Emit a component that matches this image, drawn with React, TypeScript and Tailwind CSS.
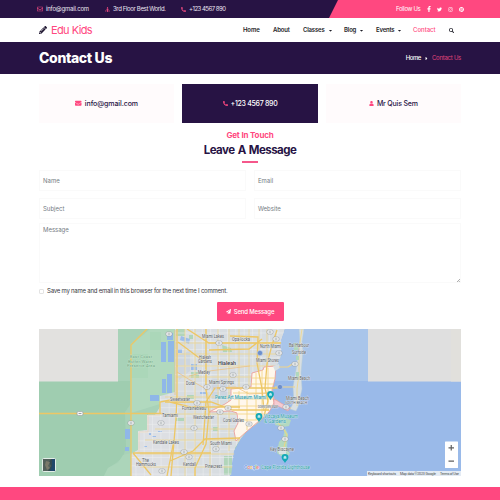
import React from "react";
import {
  FaCaretDown,
  FaCaretRight,
  FaEnvelope,
  FaFacebookF,
  FaInstagram,
  FaPaperPlane,
  FaPencilAlt,
  FaPhoneAlt,
  FaPinterest,
  FaRegEnvelope,
  FaSearch,
  FaStreetView,
  FaTwitter,
  FaUser,
} from "react-icons/fa";

function TopBar() {
  return (
    <div className="relative flex h-[18px] items-center bg-[#271344] text-[6px] leading-none text-[#ece6f2]">
      <div className="box-content flex w-[68px] items-center gap-[3px] pl-[37px]">
        <FaRegEnvelope className="size-[6px] text-[#e0457c]" />
        <span className="tracking-[-0.2px]">info@gmail.com</span>
      </div>
      <div className="flex w-[76px] items-center gap-[3px]">
        <FaStreetView className="size-[5px] text-[#e0457c]" />
        <span className="whitespace-nowrap tracking-[-0.35px]">3rd Floor Best World.</span>
      </div>
      <div className="flex items-center gap-[3px]">
        <FaPhoneAlt className="size-[5px] text-[#e0457c]" />
        <span className="tracking-[-0.5px]">+123 4567 890</span>
      </div>
      <div className="ml-auto flex h-[18px] w-[171px] items-center bg-[#ff4880] pl-[67px] text-white [clip-path:polygon(9px_0,100%_0,100%_100%,0_100%)]">
        <span className="w-[30px] tracking-[-0.35px]">Follow Us</span>
        <FaFacebookF className="mr-[5px] size-[6px]" />
        <FaTwitter className="mr-[6px] size-[5px]" />
        <FaInstagram className="mr-[6px] size-[5px]" />
        <FaPinterest className="size-[5px]" />
      </div>
    </div>
  );
}

function Nav() {
  return (
    <div className="flex h-6 items-center bg-white text-[6px] font-semibold leading-none text-[#1d1d27]">
      <div className="flex w-[243px] items-center gap-[4px] pl-[39px]">
        <FaPencilAlt className="size-2 text-[#1e1530]" />
        <span className="text-[11px] font-normal tracking-[-0.65px] text-[#ff4880] [word-spacing:0.5px]">Edu Kids</span>
      </div>
      <span className="w-[30px] tracking-[-0.1px]">Home</span>
      <span className="w-[30px] tracking-[-0.15px]">About</span>
      <span className="flex w-[41px] items-center gap-[4px] tracking-[-0.2px]">Classes <FaCaretDown className="size-[5px]" /></span>
      <span className="flex w-8 items-center gap-[3px] tracking-[-0.2px]">Blog <FaCaretDown className="size-[5px]" /></span>
      <span className="flex w-[37px] items-center gap-[3px] tracking-[-0.2px]">Events <FaCaretDown className="size-[5px]" /></span>
      <span className="w-9 font-medium text-[#ff4880]">Contact</span>
      <FaSearch className="size-[5px]" />
    </div>
  );
}

function Banner() {
  return (
    <div className="flex h-8 items-center justify-between bg-[#271344] pl-[39px] pr-[39px] text-white">
      <h1 className="text-[14px] font-extrabold leading-none tracking-[-0.35px]">Contact Us</h1>
      <div className="flex items-center gap-[3px] text-[6px] leading-none">
        <span className="font-medium tracking-[-0.4px]">Home</span>
        <FaCaretRight className="size-[5px]" />
        <span className="tracking-[-0.26px] text-[#e0457c]">Contact Us</span>
      </div>
    </div>
  );
}

function Cards() {
  return (
    <div className="mt-[10px] grid h-[39px] shrink-0 grid-cols-3 gap-[8px] px-[39px] text-[7px] font-medium leading-none text-[#271344]">
      <div className="flex items-center justify-center gap-[3px] bg-[#fffbfc]">
        <FaEnvelope className="size-[6.5px] text-[#ff4880]" />
        <span className="tracking-[-0.08px]">info@gmail.com</span>
      </div>
      <div className="flex items-center justify-center gap-[3px] bg-[#271344] text-white">
        <FaPhoneAlt className="size-[5px] text-[#ff4880]" />
        <span className="tracking-[-0.3px]">+123 4567 890</span>
      </div>
      <div className="flex items-center justify-center gap-[3px] bg-[#fffbfc]">
        <FaUser className="size-[5px] text-[#ff4880]" />
        <span className="tracking-[-0.18px]">Mr Quis Sem</span>
      </div>
    </div>
  );
}

const field = "flex h-[21px] items-center border border-[#fafafa] pl-[3px]";

function ContactForm() {
  return (
    <div className="px-[39px]">
      <div className="flex flex-col items-center leading-none">
        <p className="mt-[8px] text-[8px] font-bold tracking-[-0.15px] text-[#ff4880]">Get In Touch</p>
        <h2 className="mt-[5px] h-[12px] text-[11.5px] font-bold leading-[12px] tracking-[-0.55px] text-[#271344] [word-spacing:1px]">Leave A Message</h2>
        <div className="mt-[5px] h-[2px] w-4 bg-[#f5578b]" />
      </div>
      <div className="mt-[7px] grid grid-cols-2 gap-x-[8px] gap-y-[7px] text-[6px] leading-none text-[#747b83]">
        <div className={field}>Name</div>
        <div className={field}>Email</div>
        <div className={field}>Subject</div>
        <div className={field}>Website</div>
      </div>
      <div className="mt-[4px] flex h-[60px] justify-between border border-[#fafafa] pl-[3px] pt-[3px] text-[6px] leading-none text-[#747b83]">
        <span>Message</span>
        <svg className="size-[3px] self-end" viewBox="0 0 3 3" stroke="#777" strokeWidth=".6">
          <path d="M0 3 3 0M1.8 3 3 1.8" />
        </svg>
      </div>
      <div className="mt-[5px] flex h-[6px] items-center gap-[3px] text-[6px] leading-none text-[#36363c]">
        <span className="size-[5px] rounded-[1px] border border-[#e3e3e3]" />
        <span className="whitespace-nowrap tracking-[-0.22px]">Save my name and email in this browser for the next time I comment.</span>
      </div>
      <div className="mx-auto mt-[8px] flex h-[19px] w-[67px] items-center justify-center gap-[3px] rounded-[1px] bg-[#ff4880] text-[6px] font-medium leading-none text-white">
        <FaPaperPlane className="size-[5px]" />
        <span className="tracking-[-0.15px]">Send Message</span>
      </div>
    </div>
  );
}

type Label = [string, number, number, number, number?];

const towns: Label[] = [
  ["Miami Lakes", 202, 338, 22],
  ["Opa-locka", 232, 341, 18],
  ["North Miami", 260, 347.5, 21],
  ["Bal Harbour", 289, 346.5, 20],
  ["Surfside", 292, 353.5, 14],
  ["Hialeah", 199, 358.5, 12],
  ["Gardens", 198, 362.5, 14],
  ["Miami Shores", 256, 361.5, 23],
  ["Medley", 198, 373.5, 12],
  ["Doral", 186, 384.5, 9],
  ["Miami Springs", 209, 383.5, 25],
  ["Miami Beach", 288, 380, 22],
  ["Sweetwater", 170, 400.5, 20],
  ["Fontainebleau", 182, 409.5, 24],
  ["Westchester", 193, 418.5, 21],
  ["Coral Gables", 223, 421.5, 21],
  ["Tamiami", 162, 416.5, 16],
  ["Kendale Lakes", 153, 443.5, 26],
  ["South Miami", 210, 445, 22],
  ["Kendall", 183, 465.5, 13],
  ["Pinecrest", 205, 467.5, 17],
  ["The", 142, 461.5, 7],
  ["Hammocks", 136, 465.5, 20],
  ["Key Biscayne", 270, 451, 24],
  ["Miami Beach", 286, 400, 23],
  ["SOUTH BEACH", 285, 404, 22, 3],
  ["DOWNTOWN MIAMI", 258, 408, 20, 3],
];

const attractions: Label[] = [
  ["Perez Art Museum Miami", 215, 398.5, 51, 5],
  ["Vizcaya Museum", 264, 418, 34, 4.5],
  ["& Gardens", 264, 422.5, 22, 4.5],
  ["Cape Florida Lighthouse", 261, 469, 49, 4.5],
];

const shields: [number, number][] = [
  [169, 334], [219, 343], [270, 332], [276, 339], [279, 353],
  [233, 375], [223, 389], [207, 387], [246, 387], [295, 364], [197, 403], [228, 408],
  [194, 428], [220, 412], [249, 424], [281, 428], [285, 439], [216, 449], [184, 452],
  [162, 471], [161, 423], [131, 423], [80, 413.5], [189, 457], [286, 407],
];

const pins: [number, number][] = [[270.5, 395], [259, 417], [285, 458]];

const streets = Array.from({ length: 18 }, (_, i) => i);

function MapView() {
  return (
    <svg
      className="block h-[147px] w-[422px] font-[Roboto,'Liberation_Sans',sans-serif]"
      viewBox="39 329 422 147"
    >
      <defs>
        <clipPath id="city">
          <path d="M175 329H285L281 343 282 354 276 370 271 386 272 397 260 421 246 432 240 440 235 448 231 476H131V454L138 450V432L147 430V415H155L160 407V396L175 392Z" />
        </clipPath>
      </defs>
      <rect x="39" y="329" width="422" height="147" fill="#9fcdb0" />
      <path d="M118 329H176V476H104L108 468 116 463 123 457 126 447 125 412 130 405 130 381H118Z" fill="#a8d2b8" />
      <path d="M131 344 143 335 150 329H180V396L160 404 131 413Z" fill="#b1d9be" />
      <rect x="39" y="329" width="79" height="52.5" fill="#e2e1df" />
      <path d="M131 354h17v24h-17zM150 332h11v18h-11z" fill="#abd7b9" />
      <path d="M131 413h16v17l-9 4v20l-7 8z" fill="#b0d9be" />
      <path d="M167 333h6v7h-6zM161 342h5v20h-5zM168 341h6v21h-6zM162 379h4v14h-4zM167 374h5v19h-5zM150 395h9v6h-9zM125 429h5v10h-5zM125 447h4v4h-4z" fill="#8fb7e8" />

      <path d="M175 329H285L281 343 282 354 275 370 272 387 275 401 268 412 260 421 246 432 240 440 235 448 231 476H131V454L138 450V432L147 430V415H155L160 407V396L175 392Z" fill="#d8dde1" />
      <path d="M131 476V455L138 450V431L147 430V415H177V476Z" fill="#dddfe3" />
      <path d="M104 476 108 468 118 463 123 455 131 453V476Z" fill="#acd5ba" />

      <path d="M285 329H461V476H230L234 451 240 440 249 429 260 422 270 410 275 401 272 388 276 368 282 354 280 344Z" fill="#9abae9" />
      <path d="M285 329H368V381H273L276 368 282 354 280 344Z" fill="#a9c5ea" />
      <rect x="368" y="329" width="93" height="52.5" fill="#dfdfdf" />
      <rect x="451" y="329" width="10" height="52.5" fill="#e1e0dc" />

      <g clipPath="url(#city)">
        <path d="M222 345l9 3 1 4h-9zM176 329h9v7h-9zM191 372h8v6h-8zM187 395h7v4h-7zM224 456h8v19h-8zM213 427h5v4h-5zM176 418h8v3h-8zM189 335h4v4h-4z" fill="#b1d5ba" />
        <path d="M181 336l9 3-1 5-9-4zM184 362l5-1v4h-4zM191 364h6v6h-6zM178 349h4v4h-4zM190 383h5v2h-5zM200 392h7v2h-7zM149 433h2v2h-2zM158 431h4v1h-4zM144 446h3v1h-3zM152 436h4v1h-4z" fill="#9dbdea" />
        <path d="M177 355 190 351V371L179 380ZM211 379H229V399H211Z" fill="#cdd5df" />
        <g stroke="#eceef0" strokeWidth=".55" fill="none">
          {streets.map((i) => (
            <path key={`v${i}`} d={`M${135 + i * 8.4} 329l1 147`} />
          ))}
          {streets.map((i) => (
            <path key={`h${i}`} d={`M130 ${333 + i * 8.3}h160`} />
          ))}
        </g>
        <g stroke="#ecd798" strokeWidth=".9" fill="none">
          <path d="M185 329V476M195 329V476M206 329V390L210 400V476M218 329V451M229 329V451M239 329V442M249 329V430M259 329V421M267 329V414M176 343H283M176 354H285M176 366H280M176 377H278M165 397H275M165 414H270M155 429H255M145 440H245M140 454H240M140 467H235" />
        </g>
      </g>
      <path d="M236 441 234 431 238 423 237 413 231 411 209 412 225 404 231 400V389L251 387 252 373 263 370 264 367 276 366 275 379 272 390 274 403 269 412 259 421 246 432Z" fill="#fff7ec" stroke="#eb9f9c" strokeWidth=".9" />
      <g stroke="#f4d68a" strokeWidth=".9" fill="none">
        <path d="M252 378H275M251 384H274M233 393H273M234 399H273M222 406H273M238 414H268M240 420H260M256 373V420M262 370V418M268 368V411M247 391V430M239 391V410" />
      </g>
      <g stroke="#edc765" strokeWidth="1.3" fill="none">
        <path d="M39 413.5H163" />
        <path d="M131 476V345L147 329" />
        <path d="M160 413V402L170 400M177 329V396L176 418 171 476M206 329V390L209 412 206 444 195 468V476" />
        <path d="M165 402H211L233 410H269M217 388H278M170 402 190 407H240M230 336 258 337 257 363 262 389 264 411" />
        <path d="M187 329 209 343H281M178 342 206 363M209 350 249 349 262 339M133 453 164 453 211 453" />
        <path d="M170 461 193 451 205 439 240 438M133 453 151 475M167 476 174 440M215 388 206 402 203 445" />
        <path d="M277 330 272 345 267 364 265 388 268 401 264 416" />
      </g>
      <g stroke="#eebc73" strokeWidth=".65" fill="none">
        <path d="M175 330V395M213 388 236 387 249 394 271 393M189 376 209 371 250 366M177 372 190 380 208 390" />
        <path d="M139 452V432H148V415H160" stroke="#efd5b5" />
      </g>

      <path d="M299 329H304L302 342 303 351 301 373 302 389 298 407 296 411 290 409 294 402 293 387 296 370 298 354 300 344Z" fill="#d8dfe2" stroke="#b7ccd7" strokeWidth=".5" />
      <path d="M302 329 299 349 299 374 297 389 297 406" fill="none" stroke="#eed790" strokeWidth=".9" />
      <path d="M294 343h4v7h-4zM296 356h3v4h-3zM296 372h3v5h-3z" fill="#b0d7bc" />
      <path d="M273 366 279 364 280 368 275 371Z" fill="#d8dfe2" />
      <path d="M279 367 288 367 294 363M275 387H295M276 400 284 408 291 408" fill="none" stroke="#f0d48a" strokeWidth="1.1" />
      <path d="M274 399 281 403 290 408 288 411 280 407 274 405Z" fill="#f5cad0" stroke="#e4999c" strokeWidth=".6" />
      <path d="M276 419 283 417 291 420 289 426 283 427 275 425ZM285 428 288 434 287 447 290 454 284 458 277 453 279 442 283 438Z" fill="#b4d9bf" />
      <path d="M276 421 283 428 287 435 284 447" fill="none" stroke="#efd681" strokeWidth="1" />
      <path d="M278 447h8v7h-7z" fill="#dce2e3" />

      {shields.map(([x, y]) => (
        <g key={`${x}-${y}`}>
          <rect x={x - 3} y={y - 2} width="6" height="4" rx="1.4" fill="#f6f7f7" stroke="#959b9f" strokeWidth=".6" />
          <path d={`M${x - 1.4} ${y}h2.8`} stroke="#8d9498" strokeWidth=".9" />
        </g>
      ))}
      {[[260, 353], [280, 387]].map(([x, y]) => (
        <circle key={x} cx={x} cy={y} r="2.6" fill="#6d8fcb" stroke="#c6d6ee" strokeWidth=".5" />
      ))}

      <g fill="#565a5f" stroke="#eef0f1" strokeWidth=".5" paintOrder="stroke">
        {towns.map(([t, x, y, w, s]) => (
          <text key={`${t}${y}`} x={x} y={y} fontSize={s ?? 4.7} textLength={w} lengthAdjust="spacingAndGlyphs">{t}</text>
        ))}
      </g>
      <text x="218" y="365" fontSize="6" fontWeight="500" fill="#35393e" stroke="#f3f4f4" strokeWidth=".6" paintOrder="stroke" textLength="18" lengthAdjust="spacingAndGlyphs">Hialeah</text>
      <g fill="#6b9f80" stroke="#c7e7d0" strokeWidth=".5" paintOrder="stroke" fontSize="4.2">
        <text x="130" y="358" textLength="22">East Coast</text>
        <text x="128" y="362.5" textLength="25">Buffer/Water</text>
        <text x="127" y="367" textLength="28">Preserve Area</text>
      </g>
      <g fill="#2a9ba6" stroke="#d3eaf0" strokeWidth=".6" paintOrder="stroke">
        {attractions.map(([t, x, y, w, s]) => (
          <text key={t} x={x} y={y} fontSize={s} textLength={w} lengthAdjust="spacingAndGlyphs">{t}</text>
        ))}
      </g>
      {pins.map(([x, y]) => (
        <g key={x}>
          <path d={`M${x} ${y + 5}C${x - 1} ${y + 3} ${x - 3.4} ${y + 2} ${x - 3.4} ${y - 0.7}A3.4 3.4 0 1 1 ${x + 3.4} ${y - 0.7}C${x + 3.4} ${y + 2} ${x + 1} ${y + 3} ${x} ${y + 5}Z`} fill="#13a9b7" />
          <path d={`M${x - 1.4} ${y + 0.8}h2.8v-2l-1.4-1-1.4 1z`} fill="#b9e9ed" />
        </g>
      ))}
      <text x="244" y="469" fontSize="5.5" fontWeight="500" stroke="white" strokeWidth=".5" paintOrder="stroke" textLength="15">
        <tspan fill="#628de5">G</tspan><tspan fill="#e77570">o</tspan><tspan fill="#e7be50">o</tspan><tspan fill="#628de5">g</tspan><tspan fill="#63af79">l</tspan><tspan fill="#e77570">e</tspan>
      </text>

      <rect x="42.5" y="458.5" width="13" height="13" rx=".7" fill="#33484f" stroke="#e3eee7" />
      <path d="M43 459h8l-2 3 2 4-3 5h-5z" fill="#52605a" />
      <path d="m46 461 4 1-2 4 2 2-3 2-2-5z" fill="#7b7a6a" />
      <path d="M52 459h3v12h-5l2-5z" fill="#20476a" />
      <rect x="445" y="441.5" width="13" height="26.5" rx=".5" fill="white" />
      <path d="M448.5 447.8h5.5M451.25 445v5.6M448.5 461.2h5.5" stroke="#606060" strokeWidth="1.2" />
      <rect x="367" y="471" width="94" height="5" fill="#e9eef4" opacity=".94" />
      <g fontSize="3.6" fill="#4b4b4b">
        <text x="368" y="474.8" textLength="28">Keyboard shortcuts</text>
        <text x="400" y="474.8" textLength="36">Map data ©2023 Google</text>
        <text x="440" y="474.8" textLength="19">Terms of Use</text>
      </g>
    </svg>
  );
}

export default function App() {
  return (
    <div className="flex h-[500px] w-[500px] flex-col overflow-hidden bg-white font-[Inter,'Noto_Sans',sans-serif]">
      <TopBar />
      <Nav />
      <Banner />
      <Cards />
      <ContactForm />
      <div className="mt-[8px] h-[147px] shrink-0 px-[39px]">
        <MapView />
      </div>
      <div className="mt-auto h-[13px] shrink-0 bg-[#ff4880]" />
    </div>
  );
}
